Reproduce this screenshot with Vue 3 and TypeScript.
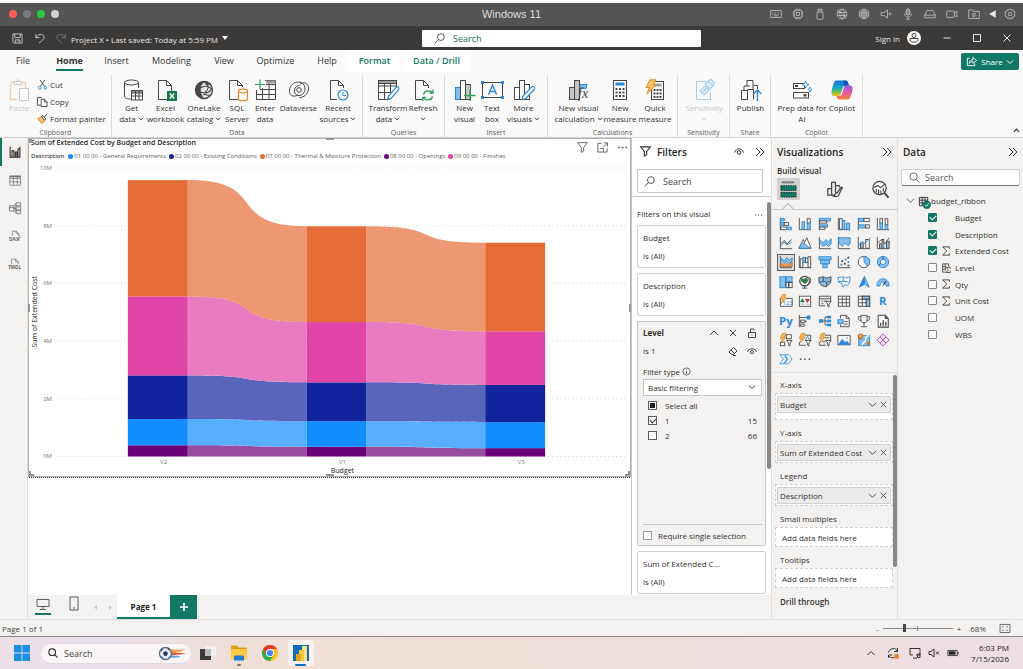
<script setup lang="ts">
import { ref } from 'vue'

interface RibbonButton { icon: string; lines: string[]; chevron?: boolean; disabled?: boolean }
interface RibbonGroup { name: string; cls: string; buttons: RibbonButton[] }
interface Field { name: string; checked: boolean; icon?: string }

const D = '#484644'
const B = '#2b88d8'
const L = '#83beec'
const G = '#a19f9d'

const r = (x: number, y: number, w: number, h: number, fill = 'none', stroke = 'none') =>
  `<rect x="${x}" y="${y}" width="${w}" height="${h}" fill="${fill}" stroke="${stroke}"/>`
const p = (d: string, stroke = D, fill = 'none', w = 1) =>
  `<path d="${d}" fill="${fill}" stroke="${stroke}" stroke-width="${w}"/>`
const c = (x: number, y: number, rad: number, fill = 'none', stroke = 'none', w = 1) =>
  `<circle cx="${x}" cy="${y}" r="${rad}" fill="${fill}" stroke="${stroke}" stroke-width="${w}"/>`

const vAxis = p('M1.5 1v14')
const hAxis = p('M1 14.5h14')
const bolt = p('M4 .5h4L6 4.5h2.5L2.5 11l1.500-5H1.5z', '#d67f1c', '#f8b55a', 0.8)
const funnel = p('M8.5 8.5h6.5l-2.500 3v3.5l-1.500-1v-2.500z', D, '#fff')

const ribbonIcons: Record<string, string> = {
  getData: p('M3.5 3.5v14c0 1.5 3 2.5 6.5 2.5M17.5 9V3.5') +
    '<ellipse cx="10.5" cy="3.5" rx="7" ry="2.5" fill="#f3f2f1" stroke="#484644"/>' +
    r(10.5, 11.5, 11, 9.5, '#fff', D) + r(10.5, 11.5, 11, 2.5, '#a19f9d', D) + p('M10.5 17h11M14.5 12v9M18 12v9'),
  excel: p('M13 20.5H3.5v-19h8l5 5V12M11.5 1.5v5h5') + r(12, 12, 10, 10, '#107c41') + p('M14.8 14.5l4.400 5M19.2 14.5l-4.400 5', '#fff', 'none', 1.4),
  oneLake: c(11, 11, 8.5, '#e8e6e4', D, 1.3) + p('M2.8 13C1.500 7 6 2 12 2.500 8.500 4.500 7 8 7.500 12c.3 2.500 1.200 4.500 2.500 6.500C6 18.500 3.500 16 2.800 13z', D, D, 0.6) +
    p('M7.500 9c4-3 9-2 11.500 1.500M8 13c5 2 9 0 11-4M13 3c3 4 3 8-1 10M10 15c3 1 6 2 7 1', D, 'none', 1.1) + p('M11 2.500c3 0 5 .5 6.500 2.500l-4 1z', D, D, 0.6),
  sql: p('M12 20.5H3.5v-19h8l5 5V8M11.5 1.5v5h5') +
    p('M12.5 12v8c0 1 2 1.7 4.5 1.7s4.5-.7 4.5-1.700v-8', '#e8862a', '#fff', 1.2) + '<ellipse cx="17" cy="12" rx="4.5" ry="1.8" fill="#fff" stroke="#e8862a" stroke-width="1.2"/>',
  enter: p('M11 1.5h10.5v19h-19V11M2.5 15.5h19M6 10.5h15.5M8.5 9v11M15 3v17M12 5.5h9') + r(12, 1.5, 9.5, 3, '#a19f9d') + p('M1 5.5h10M6 .5v10', '#2f9e55', 'none', 1.2),
  dataverse: p('M10 16c-5 3-9 0-8.500-5C2 6 6 3 10.5 3c4 0 6.5 3 6.5 7 0 4-3 6.5-6 6.5S6 14 6.5 11c.5-3 3-4.500 5-4.500') + p('M12 5c5-3 9 0 8.5 5-.5 5-4.500 8.5-9 8.5') + c(11, 11, 2.3, 'none', D),
  recent: p('M10 20.5H3.5v-19h8l5 5V9M11.5 1.5v5h5') + c(16, 16, 5, '#fff', B, 1.2) + p('M16 13v3.5h3', B),
  transform: p('M13 20.5H1.5v-19h18V9M1.5 7h18M1.5 13.5h12M7.5 4v16M13.5 4v10') + r(1.5, 1.5, 18, 3, '#a19f9d', D) + p('M10.5 20.5l1-3.500L19 8.5c2-1.500 4 .5 2.5 2.5L14 19.5z', B, '#fff', 1.2),
  refresh: p('M10 20.5H3.5v-19h8l5 5V9M11.5 1.5v5h5') + p('M11.5 15.5c1-4 7-5 9-1.500M21 10.5V14h-3.500M20.5 17.5c-1 4-7 4.5-9 1.5M10.8 22v-3.500h3.5', '#2f9e55', 'none', 1.3),
  newVisual: r(1.5, 8.5, 5, 12, L, B) + r(6.5, 1.5, 5, 19, '#fff', D) + r(11.5, 5.5, 5, 15, '#c8c6c4', D) + p('M10 16.5h11.5M16 11v11', '#2f9e55', 'none', 1.4),
  textBox: r(1.5, 3.5, 20, 15, 'none', D) + p('M7.5 15.5L11.5 6l4 9.5M9 12.5h5', B, 'none', 1.4) + r(0, 2, 3, 3, B) + r(20, 2, 3, 3, B) + r(0, 17, 3, 3, B) + r(20, 17, 3, 3, B),
  moreVisuals: r(1.5, 8.5, 5, 12, '#fff', D) + r(6.5, 1.5, 5, 19, '#fff', D) + r(11.5, 5.5, 5, 15, '#fff', D) + p('M9 20.5l1-3.500L18.5 8c2-1.500 4 .5 2.5 2.5L13 19.5z', B, '#fff', 1.2),
  visualCalc: r(1.5, 8.5, 5, 12, '#c8c6c4', D) + r(6.5, 1.5, 5, 19, '#c8c6c4', D) + p('M12 5.5h7l-1 4h-6z', B, L) + '<text x="10" y="19" font-size="14" font-style="italic" font-family="Liberation Serif, serif" fill="#484644">fx</text>',
  measure: r(4.5, 1.5, 13, 19, '#fff', D) + r(6.5, 3.5, 9, 3, B) + p('M6.5 10h9M6.5 13.5h9M6.5 17h9', D, 'none', 2).replace('/>', ' stroke-dasharray="2 1.5"/>'),
  quick: r(7.5, 2.5, 12, 18, '#fff', D) + r(9.5, 4.5, 8, 3, '#a19f9d') + p('M9.5 11h8M9.5 14.5h8M9.5 18h8', D, 'none', 2).replace('/>', ' stroke-dasharray="2 1"/>') + p('M6 .8h6L9 6h3.5L3 14.5 5.5 8.5H2z', '#e08a1e', '#fbc36b'),
  sensitivity: p('M13 2.5H3.5v18h14V14', '#a9cde8') + p('M7 12l5-5 4 4-5 5zM9 14l5-5M12 5l3-3 5 5-3 3zM15 2l3-1.500L21.5 4 20 7', '#a9cde8', '#e4f1fb', 1.2),
  publish: p('M1.5 11.5h6v9h-6zM4 11v-4h6M7.5 20.5v-10h6v10M7 7V1.5h6v9M13.5 6.5h4V10') + p('M17.5 22V11M13.5 15l4-4 4 4', B, 'none', 1.4),
  prep: r(2.5, 4.5, 11, 5, '#fff', D) + r(2.5, 13.5, 15, 5.5, '#fff', D) + r(4, 6, 3, 2, D) + r(12.5, 15, 3, 2.5, D) + p('M14.5 2l1 2.5L18 5.5l-2.500 1-1 2.5-1-2.500-2.500-1 2.5-1zM19 8l.7 1.7L21 10.5l-1.500.8L19 13l-.7-1.700-1.500-.8 1.5-.8z', B, '#fff', 0.9),
  copilot: '<defs><linearGradient id="cpA" x1="0" y1="0" x2="0" y2="1"><stop offset="0" stop-color="#1b6fd8"/><stop offset=".45" stop-color="#18a6c9"/><stop offset=".7" stop-color="#5cc15a"/><stop offset="1" stop-color="#f4c51c"/></linearGradient><linearGradient id="cpB" x1="0" y1="0" x2="0" y2="1"><stop offset="0" stop-color="#9a5be8"/><stop offset=".55" stop-color="#ea5a9c"/><stop offset="1" stop-color="#f0852f"/></linearGradient></defs>' +
    '<path d="M6 1.5h8.5c1.7 0 2.3 1 2.7 2.5l.8 2.5h-3c-2 0-2.800.8-3.300 2.5L10 14.5c-.5 1.7-1.200 2.5-3 2.5H3c-2.200 0-3-2-2.500-4.500.5-3 1.5-6.500 2.5-9C3.6 2 4.5 1.5 6 1.5z" fill="url(#cpA)"/><path d="M16 20.5H8.5c-1.700 0-2.300-1-2.700-2.500L5.3 17h2.5c2 0 2.8-.8 3.3-2.500L12.8 9c.5-1.700 1.2-2.500 3-2.500H19c2.2 0 3 2 2.5 4.5-.5 3-1.500 5.500-2.500 8-.6 1.2-1.500 1.5-3 1.5z" fill="url(#cpB)"/><path d="M12.5 1.5h2c1.7 0 2.3 1 2.7 2.5l.8 2.5h-3c-1 0-1.700.2-2.300.8z" fill="#1d4fb8"/>',
}

const groups: RibbonGroup[] = [
  { name: 'Data', cls: 'g-data', buttons: [
    { icon: 'getData', lines: ['Get', 'data'], chevron: true },
    { icon: 'excel', lines: ['Excel', 'workbook'] },
    { icon: 'oneLake', lines: ['OneLake', 'catalog'], chevron: true },
    { icon: 'sql', lines: ['SQL', 'Server'] },
    { icon: 'enter', lines: ['Enter', 'data'] },
    { icon: 'dataverse', lines: ['Dataverse'] },
    { icon: 'recent', lines: ['Recent', 'sources'], chevron: true },
  ] },
  { name: 'Queries', cls: 'g-queries', buttons: [
    { icon: 'transform', lines: ['Transform', 'data'], chevron: true },
    { icon: 'refresh', lines: ['Refresh', ''], chevron: true },
  ] },
  { name: 'Insert', cls: 'g-insert', buttons: [
    { icon: 'newVisual', lines: ['New', 'visual'] },
    { icon: 'textBox', lines: ['Text', 'box'] },
    { icon: 'moreVisuals', lines: ['More', 'visuals'], chevron: true },
  ] },
  { name: 'Calculations', cls: 'g-calc', buttons: [
    { icon: 'visualCalc', lines: ['New visual', 'calculation'], chevron: true },
    { icon: 'measure', lines: ['New', 'measure'] },
    { icon: 'quick', lines: ['Quick', 'measure'] },
  ] },
  { name: 'Sensitivity', cls: 'g-sens', buttons: [
    { icon: 'sensitivity', lines: ['Sensitivity', ''], chevron: true, disabled: true },
  ] },
  { name: 'Share', cls: 'g-share', buttons: [{ icon: 'publish', lines: ['Publish'] }] },
  { name: 'Copilot', cls: 'g-copilot', buttons: [
    { icon: 'prep', lines: ['Prep data for', 'AI'] },
    { icon: 'copilot', lines: ['Copilot'] },
  ] },
]

const tabs = ['File', 'Home', 'Insert', 'Modeling', 'View', 'Optimize', 'Help', 'Format', 'Data / Drill']

const hostIcons: { name: string; svg: string }[] = [
  { name: 'Keyboard', svg: '<rect x="1" y="3.5" width="14" height="9"/><path d="M3 6.5h10M3 8.5h10" stroke-dasharray="1 1"/><path d="M5 10.5h6"/>' },
  { name: 'Processor', svg: '<rect x="3" y="3" width="10" height="10" rx="1"/><rect x="6" y="6" width="4" height="4"/><path d="M5.5 1v2M8 1v2M10.5 1v2M5.5 13v2M8 13v2M10.5 13v2M1 5.5h2M1 8h2M1 10.5h2M13 5.5h2M13 8h2M13 10.5h2"/>' },
  { name: 'USB', svg: '<rect x="4" y="5.5" width="8" height="9.5" rx="1"/><path d="M5.5 5.5V1.5h5v4M7 3.5h2"/>' },
  { name: 'Network off', svg: '<circle cx="8" cy="8" r="6.5"/><path d="M2 2l12 12M8 1.5c4 4 4 9 0 13M8 1.5c-4 4-4 9 0 13M2 6h12M2 10h12"/>' },
  { name: 'Network', svg: '<circle cx="8" cy="8" r="6.5"/><path d="M8 1.5v13M8 1.5c4 4 4 9 0 13M8 1.5c-4 4-4 9 0 13M2 5.5h12M1.5 8h13M2 10.5h12"/>' },
  { name: 'Sound', svg: '<path d="M1.5 6H5l5-3.500v11L5 10H1.5zM12.5 6v4M14.5 6.5v3"/>' },
  { name: 'Microphone', svg: '<rect x="5.5" y="1" width="5" height="8.5" rx="2.5" fill="#8c8c8c"/><path d="M3.5 7.5c0 6 9 6 9 0M8 12v3M5.5 15h5"/>' },
  { name: 'Disk', svg: '<path d="M4 3.5h8l3 6v3.5H1V9.5zM1 9.5h14"/>' },
  { name: 'Camera', svg: '<rect x="1" y="4" width="10" height="8.5" rx="1"/><path d="M11 7l3.5-2.500v7.5L11 9.5"/>' },
  { name: 'Shared folder', svg: '<path d="M1 2.500h5l1 2h8v9.5H1zM4.5 8H10M8 6.2L10.5 8M11.5 10.5H6M8 12.2L5.5 10.5"/>' },
  { name: 'Collapse', svg: '<path d="M13 3v10L4 8z" fill="#e8e8e8" stroke="none"/>' },
  { name: 'Settings', svg: '<path d="M8 1l1.500 1.800 2.300-.6.7 2.300 2.200.9L14 8l.7 2.500-2.200.9-.7 2.300-2.300-.6L8 15l-1.500-1.900-2.300.6-.7-2.300-2.200-.9L2 8l-.7-2.600 2.200-.9.700-2.300 2.300.6z"/><circle cx="8" cy="8" r="2.3"/>' },
]

const railIcons: { name: string; svg: string }[] = [
  { name: 'Report view', svg: p('M1.5 1v14h13V1M4 15V6.5h2.5V15M8.5 15V8h2V15M12 15V4h2', '#252423', 'none', 1.4) },
  { name: 'Table view', svg: p('M1 2.500h14.500v12.500H1zM1 6h14.500M1 10.500h14.500M6 3v12M11 3v12', '#797775') + r(1, 2.5, 14.5, 2, '#797775') },
  { name: 'Model view', svg: p('M.5 5h6v7h-6zM.5 7.500h6M9.500 1h6v4h-6zM9.500 6.500h6v4h-6zM9.500 11.500h6v4h-6zM6.500 8.500h3M8 8.500v-5.500h1.500M8 8.500V13.500h1.500', '#797775', 'none', 1.2) },
  { name: 'DAX query view', svg: p('M4.5 8V1.5h5l3 3V8M9.5 1.5v3h3M13 5.5c3 2 2 6-1 8', '#797775') + '<text x="0" y="14" font-size="6.5" font-weight="700" font-family="Open Sans, sans-serif" fill="#605e5c">DAX</text>' },
  { name: 'TMDL view', svg: p('M3.5 8V1.5h5l4 3.5v3M8.5 1.5v3.5h4', '#797775') + '<text x="-1" y="14" font-size="6" font-weight="700" font-family="Open Sans, sans-serif" fill="#605e5c">TMDL</text>' },
]

const table = (fill: string) => r(1.5, 2.5, 13, 11.5, fill, D) + p('M1.5 6h13M1.5 10h13M6 3v11M10.5 3v11')

const visuals: { name: string; svg: string }[] = [
  { name: 'Stacked bar chart', svg: vAxis + r(2, 1.5, 4, 3, L, B) + r(2, 6.5, 4, 3, L, B) + r(6, 6.5, 5, 3, '#fff', D) + r(2, 11.5, 7, 3, '#fff', D) + r(9, 11.5, 5, 3, L, B) },
  { name: 'Stacked column chart', svg: p('M1.5 1v13.5H15') + r(4.5, 5.5, 3, 8.500, L, B) + r(10.500, 2, 3.500, 5, '#fff', D) + r(10.5, 7, 3.5, 7, L, B) },
  { name: 'Clustered bar chart', svg: vAxis + r(2, 1.5, 12, 3, L, B) + r(2, 4.500, 8, 2.500, '#fff', D) + r(2, 9, 9, 2.500, L, B) + r(2, 11.500, 6, 2.500, '#fff', D) },
  { name: 'Clustered column chart', svg: p('M1.5 1v13.5H15') + r(3, 2, 3, 12, '#fff', D) + r(6, 4, 3, 10, L, B) + r(11, 7, 3.5, 7, L, B) },
  { name: '100% stacked bar chart', svg: vAxis + r(2, 1.500, 6, 3.500, L, B) + r(8, 1.500, 6, 3.500, '#fff', D) + r(2, 9, 8, 3.500, L, B) + r(10, 9, 4, 3.500, '#fff', D) },
  { name: '100% stacked column chart', svg: p('M1.5 1v13.5H15') + r(4.5, 2, 3, 5, '#fff', D) + r(4.5, 7, 3, 7, L, B) + r(10.5, 2, 3, 7, '#fff', D) + r(10.5, 9, 3, 5, L, B) },
  { name: 'Line chart', svg: p('M1.5 1v13.5H15M2 9l4-4 3 4 5.5-5') + p('M2 12l4-5 3 3 5.5-3', B) },
  { name: 'Area chart', svg: p('M1 14L6 4l4 10z', D, '#fff') + p('M4 14l6-12 5 12z', D, '#fff') + p('M1 14l5-6 4 3 4 3z', B, L) },
  { name: 'Stacked area chart', svg: p('M1.5 1v13.5H15') + p('M2 4l4 4 3-4 3 3 3-4v6l-3 3-3-3-3 3-4-4z', B, L) },
  { name: '100% stacked area chart', svg: p('M1.5 1v13.5H15') + p('M2 2h13v6l-2 3-4-3-3 4-4-4z', B, L) },
  { name: 'Line and stacked column chart', svg: p('M1.5 1v13.5H15') + r(4, 8, 3, 6, L, D) + r(10, 4, 4, 10, '#fff', D) + p('M2 11l4-5 3 3 6-7', B) },
  { name: 'Line and clustered column chart', svg: p('M1.5 1v13.5H15') + r(4, 9, 3, 5, L, D) + r(7, 4, 2, 10, '#fff', D) + r(12, 6, 3, 8, L, D) + p('M2 8l4-4 4 5 5-7') },
  { name: 'Ribbon chart', svg: p('M1.5 1v13.5H15') + p('M2 3l4 4 3-4 3 3 3-3v4l-3 3-3-3-3 3-4-4z', B, L) + p('M2 9l4 3 3-3 3 3 3-4v5H2z', '#c9661f', '#f2a35e') },
  { name: 'Waterfall chart', svg: p('M1.5 1v13.5H15') + r(2.5, 4.5, 3, 9.5, '#fff', D) + r(5.500, 2.5, 3, 6, L, B) + r(8.500, 3.5, 3, 5, '#fff', D) + r(11.5, 2, 3, 12, '#fff', D) },
  { name: 'Funnel', svg: r(1, 2, 14, 3.500, L, B) + r(3, 6, 10, 4, L, B) + r(5.5, 10.500, 5, 4, L, B) },
  { name: 'Scatter chart', svg: p('M1.5 1v13.5H15') + r(4, 10, 2, 2, B) + r(5, 6, 2, 2, D) + r(9, 4, 2, 2, B) + r(8, 9, 2, 2, D) + r(12, 7, 2, 2, B) + r(12, 11, 2, 2, D) + r(12, 2, 2, 2, D) },
  { name: 'Pie chart', svg: c(8, 8, 6.5, '#fff', D) + p('M8 1.5V8l4 5c4-3 3.500-11-4-11.500z', B, L) },
  { name: 'Donut chart', svg: c(8, 8, 4.7, 'none', L, 3.5) + c(8, 8, 6.5, 'none', B) + c(8, 8, 3, '#fff', B) + p('M8 1.5V5M3 12l2.5-2.500') },
  { name: 'Treemap', svg: r(1, 2, 6.5, 12.5, L, B) + r(8, 2, 7, 6, L, B) + r(8, 8.500, 3, 6, '#fff', D) + r(11.500, 8.500, 3.5, 6, '#fff', D) },
  { name: 'Map', svg: c(7.5, 7, 5.5, '#fff', D, 1.3) + p('M4 4l3 1 3-2 1 4-3 3-2-2-2-1z', '#2d7d46', '#2d7d46') + p('M13 2c4 6-1 12-8 10M7.5 13v2M4.5 15h6') },
  { name: 'Filled map', svg: p('M1 3l5-1 4 1.5 5-1.500-.5 7-5.500 4.5-5-1.500-3-4z', D, L) + p('M6 2v5l-5 1.500M6 7l4 1.500 5-2M10 8.500V13') },
  { name: 'Shape map', svg: p('M1 3l5-1 4 1.5 5-1.500-.5 6-2.500 4-3-1-2 3-1.500-4.500-3-1zM7 3v4l6 1M7 7l-6 1', B, '#fff') },
  { name: 'Azure map', svg: p('M8.5 1.5L14 14l-5.500-3.500z', B, L) + p('M8.5 1.5L2.5 14l6-3.500z', B, B) },
  { name: 'Gauge', svg: p('M1 12.5c0-11 14-11 14 0h-3.500c0-6-7-6-7 0z', B, L) + p('M8 12l3.500-5', D, 'none', 1.3) },
  { name: 'Card', svg: r(1.5, 5, 13.5, 9, '#fff', D) + '<text x="4" y="13" font-size="7" font-family="Open Sans, sans-serif" fill="#2b88d8">123</text>' + bolt },
  { name: 'KPI', svg: r(1.5, 2.5, 13, 11.5, '#fff', D) + p('M3 9l2-3.500L7 9z', '#107c41', '#107c41') + p('M8.5 6H13L10.7 9.5z', '#c4262e', '#c4262e') + p('M3 11.5h4M9 11.5h4', G) },
  { name: 'Slicer', svg: p('M8 13.5H1.5v-11h13V8M1.5 5.5h13M4 8h2M4 11h2M7 8h3') + funnel },
  { name: 'Table', svg: table('#fff') },
  { name: 'Matrix', svg: table('#fff') + r(6, 2.5, 8.5, 3.5, L, D) + r(10.5, 6, 4, 8, L, D) },
  { name: 'R script visual', svg: '<text x="3.5" y="13" font-size="13" font-weight="700" font-family="Open Sans, sans-serif" fill="#2b88d8">R</text>' },
  { name: 'Python visual', svg: '<text x="0" y="13" font-size="13" font-weight="700" font-family="Open Sans, sans-serif" fill="#2b88d8">Py</text>' },
  { name: 'Key influencers', svg: vAxis + p('M2 4h8M2 8.5h8M2 13h5') + r(3, 7, 5, 2.5, '#fff', D) + r(3, 11.5, 4, 2.5, '#fff', D) + c(12, 4, 2.5, B) },
  { name: 'Decomposition tree', svg: r(1, 6, 5, 4, B) + r(10, 2, 5, 3, B) + r(10, 6.5, 5, 3, B) + r(10, 11, 5, 3, B) + p('M6 8h4M8 8V3.5h2M8 8v4.5h2') },
  { name: 'Q&A', svg: p('M4 5V1.500h6.500L14 5v9.500H4V12M10.5 1.5V5H14M8.500 8.500h3.500M8 11.500h4') + r(1, 6.500, 6, 4.500, L, B) },
  { name: 'Goals', svg: p('M4.5 1.5h7V7c0 4-7 4-7 0zM4.5 3h-3c0 4 1.5 5 3.5 5M11.5 3h3c0 4-1.500 5-3.500 5M8 10v4M4.5 14.5h7') },
  { name: 'Paginated report', svg: p('M2.5 1.5h8l3.5 3.5v10H2.5zM10.5 1.5V5H14', D, '#fff', 1.2) + r(4.5, 10, 1.5, 3.5, D) + r(7.5, 7, 1.5, 6.5, D) + r(10.5, 9, 1.5, 4.5, D) },
  { name: 'Button slicer', svg: r(8.5, 2, 5.5, 4.5, '#fff', D) + r(1.5, 10.5, 5, 4, '#fff', D) + bolt + funnel },
  { name: 'Text slicer', svg: p('M1.5 10v4H9M8 2.5h6.5V8') + p('M8 9l3-5 2 4', B) + bolt + funnel },
  { name: 'List slicer', svg: p('M1.5 10v4H9M8 2.5h6.5V8M8 5.5h5M5 10h3') + bolt + funnel },
  { name: 'Image', svg: r(1, 3, 14, 10.5, '#fff', D) + p('M2 13l4-6 3 4 2-2 3.5 4z', B, B) + r(10.5, 5, 2, 2, L) },
  { name: 'ArcGIS map', svg: r(2, 3, 12.5, 11.5, L, B) + p('M6 14c0-4 4-3 4-7s2-4 4-4', '#fff', 'none', 1.6) + p('M4 1c-4 0-3 4 0 7 3-3 4-7 0-7z', '#d9731a', '#d9731a') + c(4, 3.5, 1, '#fff') + c(13, 12, 2, '#d9731a') },
  { name: 'Power Apps', svg: p('M8 1L15 8 8 15 1 8zM4.5 4.5l7 7M11.5 4.5l-7 7', '#a349a8', '#f7e3f7') },
  { name: 'Power Automate', svg: p('M1 3h4l4 5-4 5.5H1l4-5.500zM6.5 3h4l4.5 5-4.500 5.5h-4l4-5.500z', B, '#fff') },
  { name: 'More visuals', svg: c(3, 8, 1, D) + c(8, 8, 1, D) + c(13, 8, 1, D) },
]

// Chart data: running totals (millions) from the bottom layer up.
const layers = [
  { color: '#6B007B', tops: [0.39, 0.34, 0.29] },
  { color: '#118DFF', tops: [1.3, 1.22, 1.19] },
  { color: '#12239E', tops: [2.81, 2.57, 2.48] },
  { color: '#E044A7', tops: [5.55, 4.66, 4.34] },
  { color: '#E66C37', tops: [9.58, 7.98, 7.41] },
]
const barX = [99, 278, 457]
const barW = 60
const y = (v: number) => 297 - v * 28.9
const bottomOf = (layer: number, bar: number) => (layer === 0 ? 0 : layers[layer - 1].tops[bar])
const ribbon = (layer: number, i: number) => {
  const x0 = barX[i] + barW
  const x1 = barX[i + 1]
  const a = x0 + (x1 - x0) * 0.7
  const b = x0 + (x1 - x0) * 0.3
  const t = layers[layer].tops
  const lo0 = y(bottomOf(layer, i))
  const lo1 = y(bottomOf(layer, i + 1))
  return `M${x0} ${y(t[i])}C${a} ${y(t[i])} ${b} ${y(t[i + 1])} ${x1} ${y(t[i + 1])}V${lo1}C${b} ${lo1} ${a} ${lo0} ${x0} ${lo0}Z`
}
const ticks = [0, 2, 4, 6, 8, 10]
const categories = ['V2', 'V1', 'V3']

const legend = [
  { label: '01 00 00 - General Requirements', cls: 'k-blue' },
  { label: '02 00 00 - Existing Conditions', cls: 'k-navy' },
  { label: '07 00 00 - Thermal & Moisture Protection', cls: 'k-orange' },
  { label: '08 00 00 - Openings', cls: 'k-purple' },
  { label: '09 00 00 - Finishes', cls: 'k-pink' },
]

const wells = [
  { label: 'X-axis', value: 'Budget', cls: 'roomy' },
  { label: 'Y-axis', value: 'Sum of Extended Cost', cls: '' },
  { label: 'Legend', value: 'Description', cls: '' },
  { label: 'Small multiples', value: '', cls: '' },
  { label: 'Tooltips', value: '', cls: '' },
]

const sigma = p('M12.5 5V2.5h-9L9 8l-5.500 5.5h9V11', D, 'none', 1.3)
const hierarchy = p('M3.5 2.5h8v3M3.5 2.5v11H7M3.5 6h4M3.5 9.5h3M7 2.5v9M8 7h5.5v2M8 7l3 3.5L8 14h5.5v-2', D, 'none', 1.2)
const fields = ref<Field[]>([
  { name: 'Budget', checked: true },
  { name: 'Description', checked: true },
  { name: 'Extended Cost', checked: true, icon: sigma },
  { name: 'Level', checked: false, icon: hierarchy },
  { name: 'Qty', checked: false, icon: sigma },
  { name: 'Unit Cost', checked: false, icon: sigma },
  { name: 'UOM', checked: false },
  { name: 'WBS', checked: false },
])
const levelOne = ref(true)
const levelTwo = ref(false)
const zoom = ref(68)
</script>

<template>
  <div class="screen">
    <header class="host">
      <div class="lights"><i class="red"></i><i class="grey"></i><i class="green"></i><i class="silver"></i></div>
      <span class="host-title">Windows 11</span>
      <div class="host-icons">
        <svg v-for="h in hostIcons" :key="h.name" viewBox="0 0 16 16" role="img" :aria-label="h.name" v-html="h.svg"></svg>
      </div>
    </header>

    <div class="titlebar">
      <div class="quick">
        <button aria-label="Save"><svg viewBox="0 0 12 12"><path d="M1 1h10v10H2.5L1 9.5zM3 1v4h6V1M3.5 11V7.5h5V11M6.5 8v2" /></svg></button>
        <button aria-label="Undo"><svg viewBox="0 0 12 12"><path d="M2 1v4h4M2 5c3-5 9-4 9-.5C11 7 9 8 5.5 11" /></svg></button>
        <button aria-label="Redo" class="dim"><svg viewBox="0 0 12 12"><path d="M10 1v4H6M10 5C7 0 1 1 1 4.5 1 7 3 8 6.5 11" /></svg></button>
        <span class="doc">Project X • Last saved: Today at 5:59 PM</span>
        <svg class="caret" viewBox="0 0 6 4"><path d="M0 0h6L3 4z" /></svg>
      </div>
      <label class="top-search">
        <svg viewBox="0 0 12 12"><circle cx="7.5" cy="4.5" r="3.7" /><path d="M5 7L1 11.3" /></svg>
        <input type="text" placeholder="Search" aria-label="Search" />
      </label>
      <div class="account">
        <span>Sign in</span>
        <svg class="avatar" viewBox="0 0 14 14"><circle cx="7" cy="7" r="7" fill="#fff" /><circle cx="7" cy="4.5" r="2" fill="#fff" stroke="#3b3a39" /><path d="M3 7.5h8v1c0 3.5-8 3.5-8 0z" fill="#fff" stroke="#3b3a39" /></svg>
        <button aria-label="Minimize"><svg viewBox="0 0 8 8"><path d="M.5 4h7" /></svg></button>
        <button aria-label="Maximize"><svg viewBox="0 0 8 8"><path d="M.5.5h7v7h-7z" /></svg></button>
        <button aria-label="Close"><svg viewBox="0 0 8 8"><path d="M.5.5l7 7M7.5.5l-7 7" /></svg></button>
      </div>
    </div>

    <div class="ribbon">
      <div class="tab-row">
        <nav class="tabs" aria-label="Ribbon tabs">
          <button v-for="(t, i) in tabs" :key="t" :class="{ active: i === 1, context: i > 6 }"><span>{{ t }}</span></button>
        </nav>
        <button class="share">
          <svg class="share-ic" viewBox="0 0 12 12"><path d="M4 2.5H1.5v8h8V8M3.5 8c.5-3 2-4 4-4V1.5L11.5 5 7.5 8V6C5.5 6 4.5 6.5 3.5 8z" /></svg>
          Share
          <svg class="chev" viewBox="0 0 8 8"><path d="M1 2.5l3 3 3-3" /></svg>
        </button>
      </div>
      <div class="groups">
        <section class="group g-clip">
          <div class="clip">
            <button class="big disabled" disabled>
              <svg viewBox="0 0 22 22"><path d="M2.5 3.5h15V9M2.5 3.5v17H10" fill="none" stroke="#f6cfa8" stroke-width="1.4" /><path d="M6.5 2.5h7v3h-7zM8 2.5l2-2 2 2M11.5 9.5h9v12h-9z" fill="#fff" stroke="#c8c6c4" /></svg>
              <span>Paste</span>
            </button>
            <div class="clip-list">
              <button><svg viewBox="0 0 12 12"><path d="M3.5 1L8 8M8.5 1L4 8" fill="none" stroke="#484644" /><circle cx="3" cy="9.5" r="1.6" fill="none" stroke="#2b88d8" /><circle cx="9" cy="9.5" r="1.6" fill="none" stroke="#2b88d8" /></svg>Cut</button>
              <button><svg viewBox="0 0 12 12"><path d="M4 10H.5V1.5h4l1 1M4.5 3.5H8l3 3V11.5H4.5zM8 3.5v3h3" fill="#fff" stroke="#484644" /></svg>Copy</button>
              <button><svg viewBox="0 0 12 12"><path d="M1 6l4-2 3.5 4L6 11C4 10.5 2 8.5 1 6z" fill="#fbc36b" stroke="#d67f1c" /><path d="M5 4l1.500-1 3 3.5L8.5 8zM8 4.5L11 1" fill="#fff" stroke="#484644" /></svg>Format painter</button>
            </div>
          </div>
          <h2>Clipboard</h2>
        </section>
        <section v-for="g in groups" :key="g.name" class="group" :class="g.cls">
          <div class="buttons">
            <button v-for="b in g.buttons" :key="b.icon" class="big" :class="{ disabled: b.disabled }" :disabled="b.disabled">
              <svg viewBox="0 0 22 22" aria-hidden="true" v-html="ribbonIcons[b.icon]"></svg>
              <span v-for="(l, i) in b.lines" :key="i">{{ l }}<svg v-if="b.chevron && i === 1" class="tiny" viewBox="0 0 6 4"><path d="M1 .8l2 2 2-2" /></svg></span>
            </button>
          </div>
          <h2>{{ g.name }}</h2>
        </section>
        <button class="collapse" aria-label="Collapse ribbon"><svg viewBox="0 0 8 8"><path d="M1 5.5l3-3 3 3" /></svg></button>
      </div>
    </div>

    <main class="work">
      <nav class="rail" aria-label="Views">
        <button v-for="(v, i) in railIcons" :key="v.name" :class="{ active: i === 0 }" :aria-label="v.name">
          <svg viewBox="0 0 16 16" v-html="v.svg"></svg>
        </button>
      </nav>

      <div class="center">
        <div class="stage">
          <div class="canvas">
            <article class="visual">
              <i class="handle tl"></i><i class="handle tm"></i><i class="handle lm"></i><i class="handle rm"></i><i class="handle bl"></i><i class="handle bm"></i><i class="handle br"></i>
              <div class="visual-head">
                <h1>Sum of Extended Cost by Budget and Description</h1>
                <div class="visual-tools">
                  <button aria-label="Filters"><svg viewBox="0 0 12 12"><path d="M.7.7h10.600L7.3 6v4l-2.600 1.3V6z" /></svg></button>
                  <button aria-label="Focus mode"><svg viewBox="0 0 12 12"><path d="M5 1.5H1V11h10V7M7.5 1h4v4M11 1.5L7 5.5M3 7h4v4" /></svg></button>
                  <button aria-label="More options"><svg viewBox="0 0 12 12"><path d="M1 6h10" stroke-width="1.6" stroke-dasharray="2 2" /></svg></button>
                </div>
              </div>
              <ul class="legend">
                <li class="legend-title">Description</li>
                <li v-for="l in legend" :key="l.label"><i :class="l.cls"></i>{{ l.label }}</li>
              </ul>
              <svg class="plot" viewBox="0 0 602 317" role="img" aria-label="Ribbon chart of extended cost by budget">
                <g v-for="t in ticks" :key="t">
                  <line x1="28" x2="599" :y1="y(t)" :y2="y(t)" class="gridline" />
                  <text x="23" :y="y(t) + 2" text-anchor="end" class="tick">{{ t }}M</text>
                </g>
                <g v-for="(l, k) in layers" :key="l.color" :fill="l.color">
                  <path v-for="i in 2" :key="i" :d="ribbon(k, i - 1)" opacity="0.7" />
                  <rect v-for="(x, i) in barX" :key="x" :x="x" :y="y(l.tops[i])" :width="barW" :height="y(bottomOf(k, i)) - y(l.tops[i])" />
                </g>
                <text v-for="(n, i) in categories" :key="n" :x="barX[i] + 36" y="305" text-anchor="middle" class="tick">{{ n }}</text>
                <text x="314" y="314" text-anchor="middle" class="axis">Budget</text>
                <text transform="translate(8 152) rotate(-90)" text-anchor="middle" class="axis">Sum of Extended Cost</text>
              </svg>
            </article>
          </div>

          <aside class="filters">
            <div class="pane-title">
              <svg class="funnel" viewBox="0 0 12 12"><path d="M.7 1h10.600L7.3 6v3.500L4.7 11V6z" /></svg>
              <h2>Filters</h2>
              <button aria-label="Hide filters"><svg viewBox="0 0 10 10"><path d="M.5 5.500c2-5 7-5 9 0" /><circle cx="5" cy="5.500" r="1.800" /></svg></button>
              <button aria-label="Collapse pane"><svg viewBox="0 0 10 10"><path d="M1 1l4 4-4 4M5 1l4 4-4 4" /></svg></button>
            </div>
            <label class="filter-search">
              <svg viewBox="0 0 12 12"><circle cx="7.5" cy="4.5" r="3.7" /><path d="M5 7L1 11.3" /></svg>
              <input type="text" placeholder="Search" aria-label="Search filters" />
            </label>
            <div class="filter-scroll">
              <div class="filter-list">
                <div class="section-row"><h3>Filters on this visual</h3><button aria-label="More options"><svg viewBox="0 0 10 10"><path d="M1 6h8" stroke-dasharray="1 2" /></svg></button></div>
                <div class="card"><b>Budget</b><span>is (All)</span></div>
                <div class="card"><b>Description</b><span>is (All)</span></div>
                <div class="card open">
                  <div class="row">
                    <strong>Level</strong>
                    <button aria-label="Collapse"><svg viewBox="0 0 10 10"><path d="M1 7l4-4 4 4" /></svg></button>
                    <button aria-label="Remove"><svg viewBox="0 0 10 10"><path d="M2 2l6 6M8 2L2 8" /></svg></button>
                    <button aria-label="Lock"><svg viewBox="0 0 10 10"><path d="M1.5 4.5h7v5h-7zM3.5 4.5V1H7v1.5M5 6.5v1" /></svg></button>
                  </div>
                  <div class="row">
                    <span>is 1</span>
                    <button aria-label="Clear filter"><svg viewBox="0 0 10 10"><path d="M1 6l4.5-4.500L9 5 5.5 8.5H3.5zM3 4l3.5 3.5M5 9.5h3" /></svg></button>
                    <button aria-label="Hide"><svg viewBox="0 0 10 10"><path d="M.5 6c2-4.500 7-4.500 9 0" /><circle cx="5" cy="6" r="1.6" /></svg></button>
                  </div>
                  <label class="type-label" for="ftype">Filter type <svg viewBox="0 0 10 10"><circle cx="5" cy="5" r="4" /><path d="M5 4.5v3M5 2.5v1" /></svg></label>
                  <div class="select">
                    <select id="ftype"><option>Basic filtering</option><option>Advanced filtering</option></select>
                    <svg viewBox="0 0 8 8"><path d="M1 2.5l3 3 3-3" /></svg>
                  </div>
                  <label class="opt"><input type="checkbox" :indeterminate.prop="true" /><span>Select all</span></label>
                  <label class="opt"><input v-model="levelOne" type="checkbox" /><span>1</span><em>15</em></label>
                  <label class="opt"><input v-model="levelTwo" type="checkbox" /><span>2</span><em>66</em></label>
                  <label class="single"><input type="checkbox" /><span>Require single selection</span></label>
                </div>
                <div class="card"><b>Sum of Extended C...</b><span>is (All)</span></div>
              </div>
              <i class="thumb"></i>
            </div>
          </aside>
        </div>

        <div class="pages">
          <button class="layout on" aria-label="Desktop layout"><svg viewBox="0 0 14 12"><path d="M1 1.5h12v7H1zM7 8.5V11M4 11.5h6" /></svg></button>
          <button class="layout" aria-label="Mobile layout"><svg viewBox="0 0 10 15"><path d="M1 1h8v13H1zM4 12h2" /></svg></button>
          <button class="arrow" aria-label="Previous page"><svg viewBox="0 0 4 6"><path d="M4 0v6L0 3z" /></svg></button>
          <button class="arrow" aria-label="Next page"><svg viewBox="0 0 4 6"><path d="M0 0v6l4-3z" /></svg></button>
          <button class="page-tab">Page 1</button>
          <button class="page-add" aria-label="New page"><svg viewBox="0 0 8 8"><path d="M4 0v8M0 4h8" /></svg></button>
        </div>
      </div>

      <aside class="viz">
        <div class="pane-title">
          <h2>Visualizations</h2>
          <button aria-label="Collapse pane"><svg viewBox="0 0 10 10"><path d="M1 1l4 4-4 4M5 1l4 4-4 4" /></svg></button>
        </div>
        <h3>Build visual</h3>
        <div class="modes">
          <button class="on" aria-label="Build visual"><svg viewBox="0 0 20 20"><path d="M3 2.5h13" stroke="#797775" stroke-width="2" /><path d="M2 6h16v5H2zM2 13h16v5H2z" fill="#117865" stroke="#222" stroke-dasharray="1.5 1" /></svg></button>
          <button aria-label="Format visual"><svg viewBox="0 0 20 20"><path d="M11 16H3V9h4v7M7 9V2.5h4V13M11 6h4v2M17.5 7l-5 7M13 13c-3 0-2 3-4 4 3 1 6 0 6-2.500l3.5-7" fill="none" stroke="#484644" stroke-width="1.3" /></svg></button>
          <button aria-label="Analytics"><svg viewBox="0 0 20 20"><circle cx="9" cy="8.5" r="7" fill="#fff" stroke="#484644" stroke-width="1.3" /><path d="M3 8l4-2 3 2 5-4M5.5 13V9.5M8 15v-5M10.5 15v-4M13 12V8" fill="none" stroke="#484644" stroke-width="1.2" /><path d="M14 13.5l4.5 5" stroke="#484644" stroke-width="2" /></svg></button>
        </div>
        <svg class="notch" viewBox="0 0 12 7"><path d="M0 6.5l6-6 6 6" /></svg>
        <div class="gallery">
          <button v-for="v in visuals" :key="v.name" :aria-label="v.name" :class="{ chosen: v.name === 'Ribbon chart' }">
            <svg viewBox="0 0 16 16" v-html="v.svg"></svg>
          </button>
        </div>
        <div class="wells-scroll">
          <div class="wells">
            <template v-for="w in wells" :key="w.label">
              <h4>{{ w.label }}</h4>
              <div class="well" :class="[w.cls, { empty: !w.value }]">
                <div v-if="w.value" class="pill">
                  <span>{{ w.value }}</span>
                  <button :aria-label="'Options for ' + w.value"><svg viewBox="0 0 10 10"><path d="M1 3l4 4 4-4" /></svg></button>
                  <button :aria-label="'Remove ' + w.value"><svg viewBox="0 0 10 10"><path d="M2 2l6 6M8 2L2 8" /></svg></button>
                </div>
                <span v-else>Add data fields here</span>
              </div>
            </template>
            <h4 class="strong">Drill through</h4>
          </div>
          <i class="thumb"></i>
        </div>
      </aside>

      <aside class="data">
        <div class="pane-title">
          <h2>Data</h2>
          <button aria-label="Collapse pane"><svg viewBox="0 0 10 10"><path d="M1 1l4 4-4 4M5 1l4 4-4 4" /></svg></button>
        </div>
        <label class="data-search">
          <svg viewBox="0 0 12 12"><circle cx="5" cy="5" r="4" /><path d="M8 8l3.5 3.5" /></svg>
          <input type="text" placeholder="Search" aria-label="Search data" />
        </label>
        <div class="tree">
          <button class="table-row">
            <svg class="open-ic" viewBox="0 0 10 10"><path d="M1 3l4 4 4-4" /></svg>
            <svg class="table-ic" viewBox="0 0 14 14"><path d="M1.5 1.5h9v9h-9zM1.5 4.5h9M1.5 7.5h9M4.5 1.5v9M7.5 1.5v9" /><circle cx="9.5" cy="9.5" r="4.5" class="dot" /><path d="M7.5 9.5L9 11l2.5-3" class="tickmark" /></svg>
            <span>budget_ribbon</span>
          </button>
          <label v-for="f in fields" :key="f.name" class="field">
            <input v-model="f.checked" type="checkbox" />
            <svg viewBox="0 0 16 16" v-html="f.icon ?? ''"></svg>
            <span>{{ f.name }}</span>
          </label>
        </div>
      </aside>
    </main>

    <footer class="status">
      <span>Page 1 of 1</span>
      <div class="zoom">
        <span>-</span>
        <input v-model="zoom" type="range" min="10" max="200" aria-label="Zoom" />
        <span>+</span>
        <output>68%</output>
        <svg viewBox="0 0 12 10"><path d="M.5.5h11v9H.5zM3 3.500V3h1.500M9 3.500V3H7.5M3 6.500V7h1.500M9 6.500V7H7.5" /></svg>
      </div>
    </footer>

    <div class="taskbar">
      <div class="apps">
        <button aria-label="Start"><svg viewBox="0 0 16 16"><path d="M0 0h7.600v7.600H0zM8.4 0H16v7.600H8.4zM0 8.4h7.600V16H0zM8.4 8.4H16V16H8.4z" fill="#1b8fe0" /></svg></button>
        <label class="task-search">
          <svg viewBox="0 0 12 12"><circle cx="5" cy="5" r="4" /><path d="M8 8l3.5 3.5" /></svg>
          <input type="text" placeholder="Search" aria-label="Search Windows" />
          <svg class="ball" viewBox="0 0 30 14"><path d="M11 3c7 1 11 1 17 0-5 3-10 4-16 4z" fill="#f3a64b" /><path d="M12 6c6 1 10 1 16 1-6 2-11 2-16 2z" fill="#e4573d" /><path d="M11 9c5 1 9 0 12 2-5 1-9 1-13 0z" fill="#5aa9e6" /><circle cx="7.5" cy="7.5" r="6" fill="#e9eff6" stroke="#5b6d8c" /><path d="M7.5 5l2.500 1.700-1 3h-3l-1-3zM3 3l2 .2-2 2.300zM10 2l2 2.500-2.500-1zM2.500 10l2 1L5 13zM10 13l1-2 1.500-1z" fill="#22365c" /></svg>
        </label>
        <button aria-label="Task view"><svg viewBox="0 0 16 16"><path d="M0 4h11v11H0z" fill="#3a3a3a" /><path d="M5 1h11v10H5z" fill="#f4f4f4" opacity=".85" /><path d="M5 4h6v7H5z" fill="#bdbdbd" /></svg></button>
        <button aria-label="File Explorer" class="running"><svg viewBox="0 0 16 16"><path d="M0 1.5C0 1 .5.5 1 .5h5l1.5 2H15c.5 0 1 .5 1 1V7H0z" fill="#dc9a17" /><path d="M0 4h16v10.500H0z" fill="#fcca45" /><path d="M3 15.500V12c0-1 .5-1.500 1.500-1.500h7c1 0 1.500.5 1.500 1.500v3.500z" fill="#1f7bd0" /></svg></button>
        <button aria-label="Chrome"><svg viewBox="0 0 16 16"><circle cx="8" cy="8" r="8" fill="#fbc116" /><path d="M1.070 4A8 8 0 0 0 8 16l3.500-6H4.500z" fill="#2da94f" /><path d="M1.070 4A8 8 0 0 1 14.930 4H8L4.500 10z" fill="#e33b2e" /><circle cx="8" cy="8" r="4" fill="#fff" /><circle cx="8" cy="8" r="3.100" fill="#4285f4" /></svg></button>
        <button aria-label="Power BI Desktop" class="current"><svg viewBox="0 0 16 16"><path d="M0 0h16v16H0z" fill="#0f6cbd" /><path d="M9 1h5v15H9z" fill="#fbe08a" /><path d="M6 5h5v11H6z" fill="#f6c636" /><path d="M3 9h5v7H3z" fill="#e2a316" /></svg></button>
      </div>
      <div class="tray">
        <button aria-label="Hidden icons"><svg viewBox="0 0 12 12"><path d="M2.5 8L6 4.500 9.5 8" /></svg></button>
        <button class="update" aria-label="Updates"><svg viewBox="0 0 12 12"><path d="M1.5 5.5c1-5 8-5 9-1M10.5 1v3.500H7M10.5 7c-1 4.500-7 5-9 1.500M1.5 11V8H5" /><circle cx="9.5" cy="9.5" r="2.5" fill="#e8862a" stroke="none" /></svg></button>
        <button class="net" aria-label="Network"><svg viewBox="0 0 12 12"><path d="M1 1.500h10V8H7M1 1.500V8h3M4 11h4M8.500 7v3.500h2.500V7z" /></svg></button>
        <button aria-label="Muted"><svg viewBox="0 0 12 12"><path d="M1 4.500h2L6 2v8L3 7.500H1zM8 4.500l3 3M11 4.500l-3 3" /></svg></button>
        <button aria-label="Battery"><svg viewBox="0 0 14 12"><path d="M1 3h11v6H1zM13 5v2" /><path d="M2 4h8v4H2z" fill="#222" stroke="none" /></svg></button>
        <div class="clock"><span>6:03 PM</span><span>7/15/2026</span></div>
      </div>
    </div>
  </div>
</template>

<style>
body { margin: 0; background: #fff; }
</style>

<style scoped>
.screen { display: flex; flex-direction: column; min-height: 100vh; font: 8px/11px "Open Sans", "Noto Sans", sans-serif; color: #323130; background: #f3f2f1; box-sizing: border-box; border-top: 3px solid #fff; overflow: hidden; }
.screen * { box-sizing: border-box; }
button { font: inherit; color: inherit; background: none; border: 0; padding: 0; margin: 0; display: flex; align-items: center; justify-content: center; }
input, select { font: inherit; color: inherit; margin: 0; min-width: 0; }
input[type="text"] { border: 0; background: none; padding: 0; outline: 0; flex: 1; font-size: 9px; }
h1, h2, h3, h4, ul { margin: 0; padding: 0; font: inherit; list-style: none; }
svg { display: block; flex: none; fill: none; overflow: visible; }

.host { display: flex; align-items: center; justify-content: space-between; height: 23px; padding: 0 7px 2px 9px; background: #545454; position: relative; }
.lights { display: flex; gap: 6px; }
.lights i { width: 8px; height: 8px; border-radius: 50%; }
.red { background: #ff5f57; }
.grey { background: #7a7a7a; }
.green { background: #28c840; }
.silver { background: #d0d0d0; }
.host-title { position: absolute; inset: 0; text-align: center; font: 11px/22px "Liberation Sans", Arial, sans-serif; color: #dcdcdc; }
.host-icons { display: flex; gap: 10px; }
.host-icons svg { width: 12px; height: 12px; stroke: #c8c8c8; }
.host-icons svg:nth-last-child(-n + 2) { margin-left: -4px; }

.titlebar { display: grid; grid-template-columns: 422fr 279px 322fr; align-items: center; height: 24px; background: #3b3a39; color: #e8e6e4; }
.quick { display: flex; align-items: center; padding-left: 11px; gap: 10px; }
.quick button { width: 12px; }
.quick svg { width: 11px; height: 11px; stroke: #c8c6c4; }
.quick .dim { opacity: .45; }
.quick .doc { margin-left: -6px; padding-top: 3px; white-space: nowrap; }
.quick .caret { width: 6px; height: 4px; margin-left: -6px; fill: #fff; stroke: none; }
.top-search { display: flex; align-items: center; gap: 8px; height: 17px; padding-left: 12px; background: #fff; border-radius: 1px; }
.top-search svg { width: 11px; height: 11px; stroke: #484644; }
.top-search input::placeholder { color: #24695e; opacity: 1; }
.account { display: flex; align-items: center; justify-content: flex-end; padding-right: 12px; }
.account .avatar { width: 14px; height: 14px; margin: 0 22px 0 7px; }
.account button { width: 8px; margin-left: 22px; }
.account .avatar + button { margin-left: 0; }
.account button svg { width: 8px; height: 8px; stroke: #e8e6e4; }

.ribbon { height: 88px; background: #fafafa; border-bottom: 1px solid #d2d0ce; }
.tab-row { display: flex; justify-content: space-between; height: 22px; padding-right: 4px; }
.tabs { display: grid; grid-template-columns: 46px 47px 47px 63px 42px 61px 42px 54px 70px; font-size: 9px; line-height: 12px; }
.tabs button { white-space: nowrap; }
.tabs span { padding: 4px 0 2px; border-bottom: 2px solid transparent; }
.tabs .active span { font-weight: 700; border-color: #117865; }
.tabs .context { background: #fff; color: #117865; font-weight: 600; margin-right: 1px; }
.share { align-self: flex-end; width: 58px; height: 17px; margin-bottom: 2px; gap: 4px; background: #117865; color: #fff; border-radius: 2px; }
.share .share-ic { width: 11px; height: 11px; stroke: #fff; }
.share .chev { width: 8px; height: 8px; stroke: #fff; margin-left: -1px; }
.groups { display: flex; height: 65px; padding-top: 3px; position: relative; }
.group { display: flex; flex-direction: column; justify-content: space-between; border-right: 1px solid #dddbd9; padding: 4px 0 0 6px; height: 62px; }
.group h2 { font-size: 7px; line-height: 8px; text-align: center; color: #605e5c; margin-left: -6px; }
.buttons { display: grid; justify-content: start; }
.big { flex-direction: column; justify-content: flex-start; white-space: nowrap; line-height: 11px; }
.big > svg { width: 22px; height: 22px; margin-bottom: 1px; }
.big span { display: flex; align-items: center; gap: 2px; min-height: 11px; }
.big.disabled { color: #c8c6c4; }
.tiny { width: 6px; height: 4px; stroke: currentColor; }
.g-clip { width: 112px; }
.clip { display: flex; gap: 5px; }
.clip .big { width: 26px; }
.clip-list { display: flex; flex-direction: column; margin-top: -3px; }
.clip-list button { height: 17px; gap: 2px; justify-content: flex-start; white-space: nowrap; }
.clip-list svg { width: 11px; height: 11px; }
.g-data { width: 251px; }
.g-data .buttons { grid-template-columns: 27px 41px 36px 30px 26px 41px 38px; }
.g-queries { width: 82px; }
.g-queries .buttons { grid-template-columns: 38px 32px; }
.g-insert { width: 103px; }
.g-insert .buttons { grid-template-columns: 27px 28px 35px; }
.g-calc { width: 130px; }
.g-calc .buttons { grid-template-columns: 49px 34px 36px; }
.g-sens { width: 52px; }
.g-sens .buttons { grid-template-columns: 40px; }
.g-share { width: 41px; }
.g-share .buttons { grid-template-columns: 29px; }
.g-copilot { width: 92px; }
.g-copilot .buttons { grid-template-columns: 50px 30px; }
.collapse { position: absolute; right: 3px; bottom: 3px; }
.collapse svg { width: 7px; height: 7px; stroke: #323130; stroke-width: 1.4; }

.work { flex: 1; display: grid; grid-template-columns: 28px minmax(0, 1fr) 126px 126px; min-height: 481px; }
.rail { border-right: 1px solid #e1dfdd; }
.rail button { width: 28px; height: 28px; border-left: 2px solid transparent; padding-right: 1px; }
.rail .active { border-color: #117865; }
.rail svg { width: 12px; height: 12px; }

.center { display: flex; flex-direction: column; }
.stage { flex: 1; display: grid; grid-template-columns: minmax(0, 1fr) 140px; }
.canvas { background: #fff; }
.visual { position: relative; border: 1px solid #b3b0ad; }
.visual::after { content: ""; position: absolute; left: 0; right: 0; bottom: -2px; border-bottom: 1px dotted #323130; }
.handle { position: absolute; background: #979593; }
.tl { left: 0; top: 0; width: 3px; height: 4px; }
.tm { left: 50%; top: -1px; width: 8px; height: 2px; margin-left: -4px; }
.bm { left: 50%; bottom: 0; width: 8px; height: 2px; margin-left: -4px; }
.lm, .rm { top: 50%; height: 8px; width: 2px; margin-top: -4px; }
.lm { left: -1px; }
.rm { right: -1px; }
.bl, .br { bottom: 0; width: 5px; height: 5px; background: none; border: solid #979593; }
.bl { left: 0; border-width: 0 0 2px 2px; }
.br { right: 0; border-width: 0 2px 2px 0; }
.visual-head { display: flex; justify-content: space-between; height: 13px; padding: 0 2px; }
.visual-head h1 { font-size: 7px; line-height: 8px; font-weight: 600; color: #252423; }
.visual-tools { display: flex; gap: 8px; padding-top: 3px; }
.visual-tools button { width: 12px; height: 11px; }
.visual-tools svg { width: 11px; height: 11px; stroke: #605e5c; }
.legend { display: flex; gap: 3px; height: 9px; padding-left: 2px; font-size: 6px; line-height: 9px; color: #605e5c; white-space: nowrap; }
.legend .legend-title { font-weight: 600; color: #484644; margin-right: 1px; }
.legend li { display: flex; align-items: center; gap: 1px; }
.legend i { width: 5px; height: 5px; border-radius: 50%; }
.k-blue { background: #118dff; }
.k-navy { background: #12239e; }
.k-orange { background: #e66c37; }
.k-purple { background: #6b007b; }
.k-pink { background: #e044a7; }
.plot { width: 100%; height: auto; margin-top: -1px; }
.gridline { stroke: #dad8d6; stroke-dasharray: 1 3; }
.tick { font-size: 6px; fill: #7a7876; }
.axis { font-size: 7px; fill: #252423; }

.filters { display: flex; flex-direction: column; border-left: 1px solid #c8c6c4; background: #fff; min-width: 0; }
.pane-title { display: flex; align-items: center; height: 27px; }
.pane-title h2 { flex: 1; font-size: 10px; line-height: 14px; font-weight: 600; color: #252423; }
.pane-title button svg { width: 10px; height: 10px; stroke: #323130; }
.filters .pane-title { padding: 0 6px 0 8px; }
.filters .funnel { width: 11px; height: 11px; margin-right: 6px; stroke: #323130; stroke-width: 1.2; }
.filters .pane-title button { margin-left: 11px; }
.filter-search { display: flex; align-items: center; gap: 8px; height: 24px; margin: 4px 8px 3px 5px; padding: 0 6px; border: 1px solid #c8c6c4; border-radius: 2px; }
.filter-search svg { width: 11px; height: 11px; stroke: #484644; }
.filter-search input::placeholder, .task-search input::placeholder { color: #484644; opacity: 1; }
.filter-scroll { flex: 1; display: flex; border-top: 1px solid #c8c6c4; position: relative; }
.filter-list { flex: 1; padding: 11px 5px 0 5px; display: flex; flex-direction: column; gap: 5px; }
.filter-scroll .thumb { position: absolute; right: 0; top: 5px; width: 4px; height: 267px; border-radius: 2px; background: #8a8886; }
.section-row { display: flex; justify-content: space-between; height: 12px; }
.section-row button { margin-right: 2px; }
.section-row svg { width: 10px; height: 10px; stroke: #323130; }
.card { display: flex; flex-direction: column; gap: 7px; height: 43px; padding: 6px 5px; border: 1px solid #d2d0ce; border-radius: 2px; }
.card b { font-weight: 400; }
.card.open { height: 225px; gap: 0; background: #f3f2f1; padding: 5px 3px 4px 5px; border-color: #c8c6c4; }
.row { display: flex; align-items: center; height: 11px; margin-bottom: 7px; padding-right: 5px; }
.row > :first-child { flex: 1; }
.row button { margin-left: 9px; }
.row svg { width: 10px; height: 10px; stroke: #484644; }
.row strong { font-weight: 700; }
.type-label { display: flex; align-items: center; gap: 2px; margin: 3px 0 2px; }
.type-label svg { width: 9px; height: 9px; stroke: #484644; stroke-width: .8; }
.select { position: relative; height: 17px; margin-bottom: 2px; }
.select select { width: 100%; height: 17px; appearance: none; border: 1px solid #c8c6c4; border-radius: 0; background: #fff; padding: 0 4px; }
.select svg { position: absolute; right: 6px; top: 4px; width: 8px; height: 8px; stroke: #323130; }
.opt { display: flex; align-items: center; gap: 8px; height: 15px; padding: 0 5px; }
.opt em { margin-left: auto; font-style: normal; }
input[type="checkbox"] { appearance: none; width: 9px; height: 9px; border: 1px solid #605e5c; background: #fff; flex: none; display: grid; place-content: center; }
input[type="checkbox"]:checked::after { content: ""; width: 5px; height: 3px; border: solid #323130; border-width: 0 0 1px 1px; transform: translateY(-1px) rotate(-45deg); }
input[type="checkbox"]:indeterminate::after { content: ""; width: 5px; height: 5px; background: #201f1e; }
.single { display: flex; align-items: center; gap: 6px; margin-top: auto; padding-top: 5px; border-top: 1px solid #c8c6c4; }
.single input[type="checkbox"] { border-color: #a19f9d; }

.pages { display: flex; align-items: stretch; height: 24px; background: #f3f2f1; }
.pages svg { stroke: #605e5c; }
.layout { width: 16px; margin-left: 7px; border-bottom: 2px solid transparent; padding-bottom: 2px; margin-bottom: 4px; }
.layout.on { border-color: #117865; padding-top: 1px; }
.layout.on svg { width: 14px; height: 12px; }
.layout + .layout { margin-left: 15px; }
.layout + .layout svg { width: 10px; height: 15px; }
.arrow { width: 4px; margin-left: 11px; }
.arrow svg { width: 3px; height: 5px; fill: #c8c6c4; stroke: none; }
.page-tab { width: 53px; margin-left: 5px; background: #fff; border-bottom: 2px solid #117865; font-weight: 700; color: #252423; }
.page-add { width: 27px; background: #117865; }
.page-add svg { width: 8px; height: 8px; stroke: #fff; stroke-width: 1.6; }

.viz { border-left: 1px solid #e1dfdd; display: flex; flex-direction: column; min-width: 0; }
.viz .pane-title { padding: 0 5px; }
.viz h3 { font-weight: 600; line-height: 11px; padding-left: 5px; }
.modes { display: flex; justify-content: space-between; padding: 2px 5px 0; }
.modes button { width: 23px; height: 22px; }
.modes .on { background: #d2d0ce; }
.modes svg { width: 19px; height: 19px; }
.notch { width: 12px; height: 7px; margin: 3px 0 0 10px; stroke: #a19f9d; fill: #f3f2f1; position: relative; z-index: 1; }
.gallery { display: grid; grid-template-columns: repeat(6, minmax(0, 1fr)); grid-template-rows: repeat(8, minmax(0, 1fr)); height: 164px; margin-top: -1px; padding: 4px 4px 3px; border-top: 1px solid #c8c6c4; border-bottom: 1px solid #e1dfdd; }
.gallery button svg { width: 14px; height: 14px; }
.gallery .chosen { background: #e1dfdd; border: 1px solid #605e5c; margin: 1px; }
.wells-scroll { flex: 1; display: flex; position: relative; }
.wells { flex: 1; padding: 0 4px 0 3px; margin-top: -1px; min-width: 0; }
.wells-scroll .thumb { position: absolute; right: 0; top: 2px; width: 4px; height: 192px; border-radius: 2px; background: #8a8886; }
.wells h4 { padding: 7px 0 0 5px; line-height: 11px; margin-bottom: 3px; }
.wells .strong { font-weight: 600; padding-top: 8px; }
.well { background: #fff; border: 1px dashed #d2d0ce; padding: 2px 1px; height: 22px; }
.well.roomy { height: 27px; }
.well.empty { height: 20px; padding: 4px 6px; }
.pill { display: flex; align-items: center; height: 17px; background: #edebe9; border: 1px solid #d2d0ce; padding: 0 2px; border-radius: 1px; }
.pill span { flex: 1; white-space: nowrap; }
.pill svg { width: 9px; height: 9px; stroke: #484644; }
.pill button { margin-left: 2px; }

.data { border-left: 1px solid #e1dfdd; min-width: 0; }
.data .pane-title { padding: 0 5px; }
.data-search { display: flex; align-items: center; gap: 5px; height: 17px; margin: 4px 3px 0 3px; padding: 0 7px; background: #fff; border: 1px solid #d2d0ce; border-bottom-color: #797775; border-radius: 3px; }
.data-search svg { width: 11px; height: 11px; stroke: #605e5c; }
.data-search input::placeholder { color: #605e5c; opacity: 1; }
.tree { padding-top: 6px; }
.table-row { height: 17px; padding-left: 8px; }
.open-ic { width: 9px; height: 9px; stroke: #605e5c; }
.table-ic { width: 13px; height: 13px; margin: 3px 0 0 3px; stroke: #323130; }
.table-ic .dot { fill: #117865; stroke: none; }
.table-ic .tickmark { stroke: #fff; }
.field { display: flex; align-items: center; height: 17px; padding-left: 30px; }
.field:nth-child(3n) { height: 16px; }
.field svg { width: 12px; height: 12px; margin: 0 3px; }
.field input[type="checkbox"] { border-color: #8a8886; border-radius: 1px; }
.field input[type="checkbox"]:checked { background: #117865; border-color: #117865; }
.field input[type="checkbox"]:checked::after { border-color: #fff; }

.status { display: flex; align-items: center; justify-content: space-between; height: 18px; padding: 0 12px 0 2px; border-top: 1px solid #e1dfdd; border-bottom: 1px solid #8a8886; color: #484644; }
.zoom { display: flex; align-items: center; gap: 4px; }
.zoom input { appearance: none; width: 70px; height: 9px; background: linear-gradient(#8a8886, #8a8886) center / 1px 5px no-repeat, linear-gradient(#8a8886, #8a8886) center / 100% 1px no-repeat; }
.zoom input::-webkit-slider-thumb { appearance: none; width: 3px; height: 8px; background: #484644; }
.zoom output { margin-left: 5px; }
.zoom svg { width: 12px; height: 9px; margin-left: 9px; stroke: #605e5c; }

.taskbar { display: flex; justify-content: space-between; height: 32px; background: linear-gradient(90deg, #ecdfe6 0%, #e9e0ee 10%, #f0dfd8 22%, #f1ded9 50%, #eddfe4 100%); }
.apps { display: flex; align-items: center; padding-left: 14px; gap: 15px; }
.apps button svg { width: 16px; height: 16px; }
.apps button { position: relative; height: 26px; }
.apps button:first-child { margin-right: -5px; }
.task-search { display: flex; align-items: center; gap: 6px; width: 152px; height: 21px; padding: 0 3px 0 7px; margin-right: -7px; background: #faf6f8; border: 1px solid #e4d9df; border-radius: 11px; }
.task-search svg { width: 10px; height: 10px; stroke: #323130; stroke-width: 1.4; }
.task-search .ball { width: 30px; height: 14px; stroke: none; }
.running::after, .current::after { content: ""; position: absolute; left: 50%; bottom: 0; width: 4px; height: 2px; margin-left: -2px; background: #797775; border-radius: 1px; }
.apps .current { width: 26px; background: #faf3f3; border-radius: 3px; margin-left: -5px; }
.current::after { width: 11px; margin-left: -6px; background: #0f6cbd; }
.tray { display: flex; align-items: center; gap: 7px; padding-right: 14px; color: #201f1e; }
.tray svg { width: 12px; height: 12px; stroke: #323130; }
.tray .update, .tray .net { margin-left: 3px; }
.clock { display: flex; flex-direction: column; align-items: flex-end; line-height: 11px; min-width: 43px; }
</style>
